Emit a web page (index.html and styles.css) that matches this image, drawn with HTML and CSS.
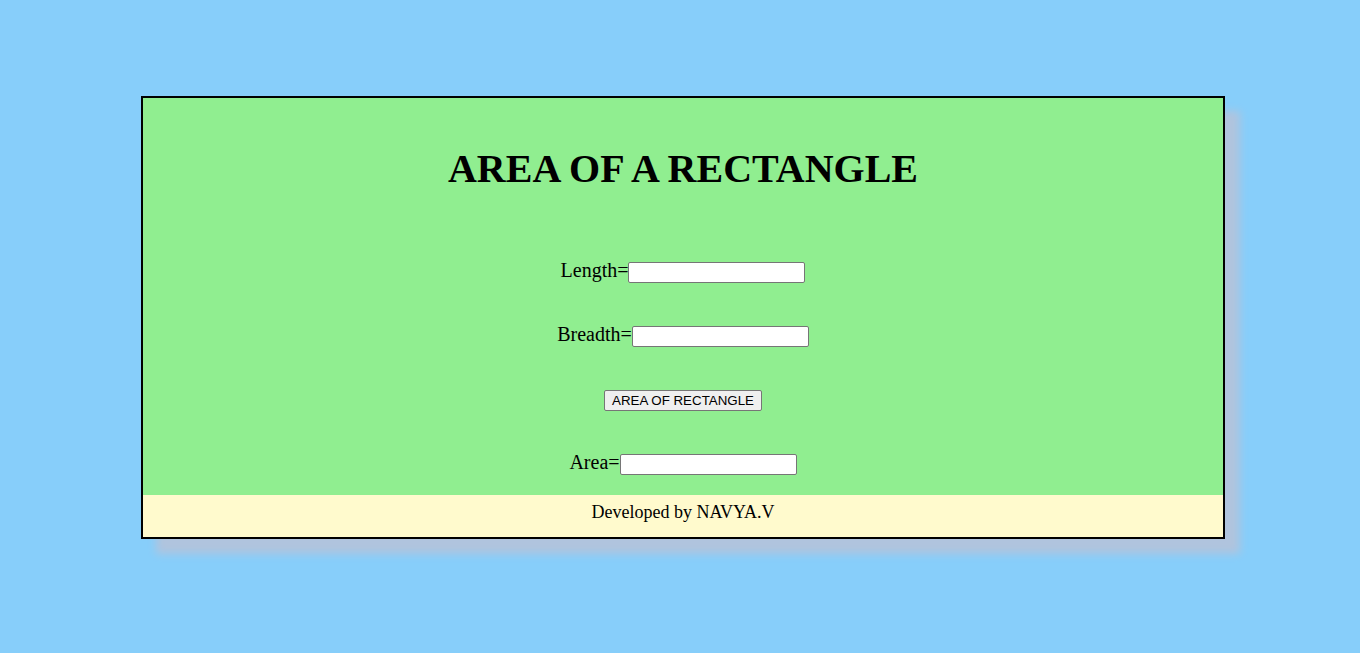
FILE: index.html
```html
<!DOCTYPE html>
<html>
<head>
<meta charset="utf-8">
<title>Area of a Rectangle</title>
<link rel="stylesheet" href="styles.css">
</head>
<body>
<div class="card">
  <div class="main">
    <h1 class="title">AREA OF A RECTANGLE</h1>
    <div class="form">
      <div class="row"><span class="label">Length=</span><input class="field" type="text"></div>
      <div class="row"><span class="label">Breadth=</span><input class="field" type="text"></div>
      <div class="row row-btn"><button class="btn" type="button">AREA OF RECTANGLE</button></div>
      <div class="row"><span class="label">Area=</span><input class="field" type="text"></div>
    </div>
  </div>
  <div class="footer">Developed by NAVYA.V</div>
</div>
</body>
</html>
```
FILE: styles.css
```css
html, body {
  margin: 0;
  padding: 0;
}
body {
  background: #87cefa;
  font-family: "Liberation Serif", "Times New Roman", serif;
  color: #000;
  padding-top: 96px;
  min-height: 653px;
  box-sizing: border-box;
}
.card {
  width: 1080px;
  margin-left: 141px;
  border: 2px solid #000;
  box-shadow: 15px 15px 8px #b0c4de;
  background: #90ee90;
}
.main {
  height: 397px;
  box-sizing: border-box;
  padding-top: 48px;
  display: flex;
  flex-direction: column;
  align-items: center;
}
.title {
  margin: 0;
  font-size: 40px;
  font-weight: bold;
  line-height: 46px;
  text-align: center;
}
.form {
  margin-top: 67px;
  display: flex;
  flex-direction: column;
  align-items: center;
  gap: 41px;
}
.row {
  height: 23px;
  display: flex;
  align-items: baseline;
  justify-content: center;
  font-size: 20px;
  line-height: 23px;
}
.row-btn {
  margin-top: 3px;
  margin-bottom: -3px;
}
.label {
  font-size: 20px;
}
.field {
  width: 177px;
  height: 21px;
  box-sizing: border-box;
  border: 1px solid #767676;
  border-radius: 2px;
  padding: 1px 2px;
  margin: 0;
  background: #fff;
  font-family: "Liberation Sans", Arial, sans-serif;
  font-size: 13.33px;
}
.btn {
  height: 21px;
  width: 158px;
  box-sizing: border-box;
  border: 1px solid #767676;
  border-radius: 2px;
  background: #efefef;
  padding: 1px 6px;
  margin: 0;
  font-family: "Liberation Sans", Arial, sans-serif;
  font-size: 13.33px;
  color: #000;
}
.footer {
  height: 42px;
  background: #fffacd;
  text-align: center;
  font-size: 18px;
  line-height: 20px;
  padding-top: 7px;
  box-sizing: border-box;
}
```
